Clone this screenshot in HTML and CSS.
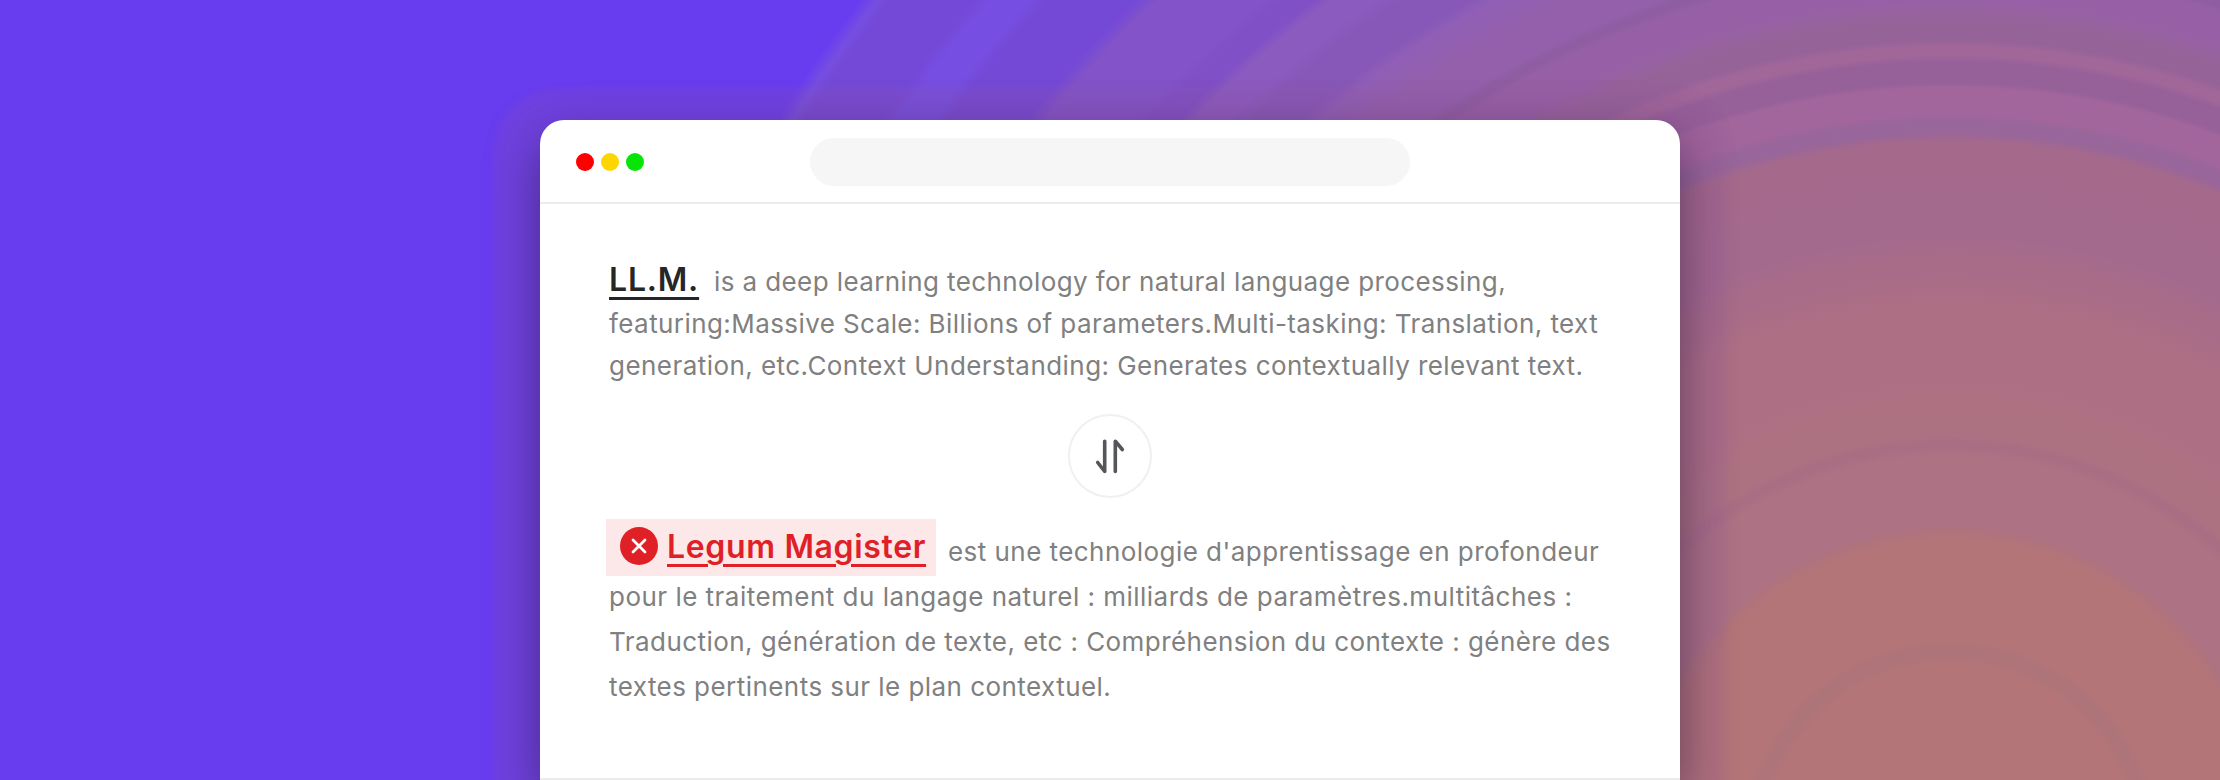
FILE: index.html
```html
<!DOCTYPE html>
<html lang="en">
<head>
<meta charset="utf-8">
<title>LLM translation</title>
<link rel="stylesheet" href="styles.css">
</head>
<body>
<main class="stage">
  <section class="window">
    <header class="titlebar">
      <div class="dots"><i class="dot red"></i><i class="dot yellow"></i><i class="dot green"></i></div>
      <div class="address"></div>
    </header>
    <div class="content">
      <div class="source">
        <p class="line"><strong class="term">LL.M.</strong><span class="s1">is a deep learning technology for natural language processing,</span></p>
        <p class="line s2">featuring:Massive Scale: Billions of parameters.Multi-tasking: Translation, text</p>
        <p class="line s3">generation, etc.Context Understanding: Generates contextually relevant text.</p>
      </div>
      <div class="swap">
        <svg width="32" height="40" viewBox="0 0 32 40" fill="none" stroke="#55565a" stroke-width="3.6" stroke-linecap="round" stroke-linejoin="round">
          <path d="M10.7 5.2V35.5L3.7 26.5M21.3 35.5V5.2L28.3 13.5"/>
        </svg>
      </div>
      <div class="target">
        <div class="line first">
          <span class="error">
            <svg class="cross" width="38" height="38" viewBox="0 0 38 38"><circle cx="19" cy="19" r="19" fill="#df2127"/><path d="M13 13L25 25M25 13L13 25" stroke="#fff" stroke-width="2.8" stroke-linecap="round"/></svg>
            <strong class="wrong">Legum Magister</strong>
          </span>
          <span class="t1">est une technologie d'apprentissage en profondeur</span>
        </div>
        <p class="line t2">pour le traitement du langage naturel : milliards de paramètres.multitâches :</p>
        <p class="line t3">Traduction, génération de texte, etc : Compréhension du contexte : génère des</p>
        <p class="line t4">textes pertinents sur le plan contextuel.</p>
      </div>
    </div>
  </section>
</main>
</body>
</html>
```
FILE: styles.css
```css
* { box-sizing: border-box; }
body { margin: 0; font-family: Inter, "Liberation Sans", sans-serif; }
p { margin: 0; }
.stage {
  width: 2220px; height: 780px; overflow: hidden; padding: 120px 540px 0;
  background: radial-gradient(circle at 1950px 850px,
    #b47578 0 184px, #ad7479 196px 202px, #b47578 212px 306px,
    #b17479 314px, #ad7283 324px 394px, #aa6e84 403px 408px, #ad7282 415px 440px,
    #ad6f84 468px 545px, #a86c88 575px 590px, #a46a8e 615px 650px,
    #a5698c 680px 708px, #98669a 718px 728px, #a2669c 736px 762px,
    #966099 768px 788px, #a26799 795px 803px, #966399 810px 830px,
    #9760a6 850px 880px, #8e5da2 886px 891px, #9460ac 898px 930px,
    #905fb6 964px, #8758b8 976px 1010px, #8b5bc0 1026px 1051px,
    #8050c6 1062px 1081px, #8253c9 1093px 1162px, #7449d6 1177px 1240px,
    #764ee1 1252px 1281px, #7449d8 1294px 1358px, #764ee0 1368px, #683df0 1382px);
}
.window {
  width: 1140px; height: 660px; background: #fff; border-radius: 24px 24px 0 0;
  border-bottom: 2px solid #ebebeb;
  box-shadow: 0 20px 50px rgba(32, 20, 45, .52), 0 14px 10px 46px rgba(150, 90, 160, .18);
}
.titlebar {
  height: 84px; display: grid; grid-template-columns: 270px 600px; align-items: center;
  border-bottom: 2px solid #ededed;
}
.dots { display: flex; gap: 7px; padding: 2px 0 0 36px; }
.dot { width: 18px; height: 18px; border-radius: 50%; }
.red { background: #fe0000; }
.yellow { background: #fdd600; }
.green { background: #07e507; }
.address { height: 48px; margin-top: 2px; border-radius: 24px; background: #f6f6f6; }
.content { display: flex; flex-direction: column; padding: 57px 0 0 69px; color: #808080; font-size: 26px; }
.line { display: flex; align-items: baseline; height: 42px; line-height: 42px; white-space: nowrap; letter-spacing: .45px; }
.s1 { letter-spacing: .4px; }
.s2 { letter-spacing: .42px; }
.term {
  font-size: 32px; font-weight: 600; color: #262626; width: 90px; margin-right: 15px; line-height: 37px;
  letter-spacing: .8px;
  text-decoration: underline; text-decoration-thickness: 2.5px; text-underline-offset: 6px;
}
.swap {
  width: 84px; height: 84px; margin: 27px 0 0 459px; border: 2px solid #f0f0f0; border-radius: 50%;
  display: flex; align-items: center; justify-content: center;
}
.target { margin-top: 21px; }
.target .line { height: 45px; line-height: 45px; }
.target .first { height: 57px; margin: 0 0 -2px -3px; align-items: center; }
.error {
  display: flex; align-items: center; width: 330px; height: 57px; padding-left: 14px;
  background: #fce8e9; margin-right: 12px;
}
.cross { margin: -4px 9px 0 0; }
.wrong {
  font-size: 32px; font-weight: 600; color: #df2127; margin-top: -2px; letter-spacing: .65px;
  text-decoration: underline; text-decoration-thickness: 3px; text-underline-offset: 6px;
}
.t1 { padding-top: 8px; }
.t2 { letter-spacing: .48px; }
.t3 { letter-spacing: .44px; }
```
